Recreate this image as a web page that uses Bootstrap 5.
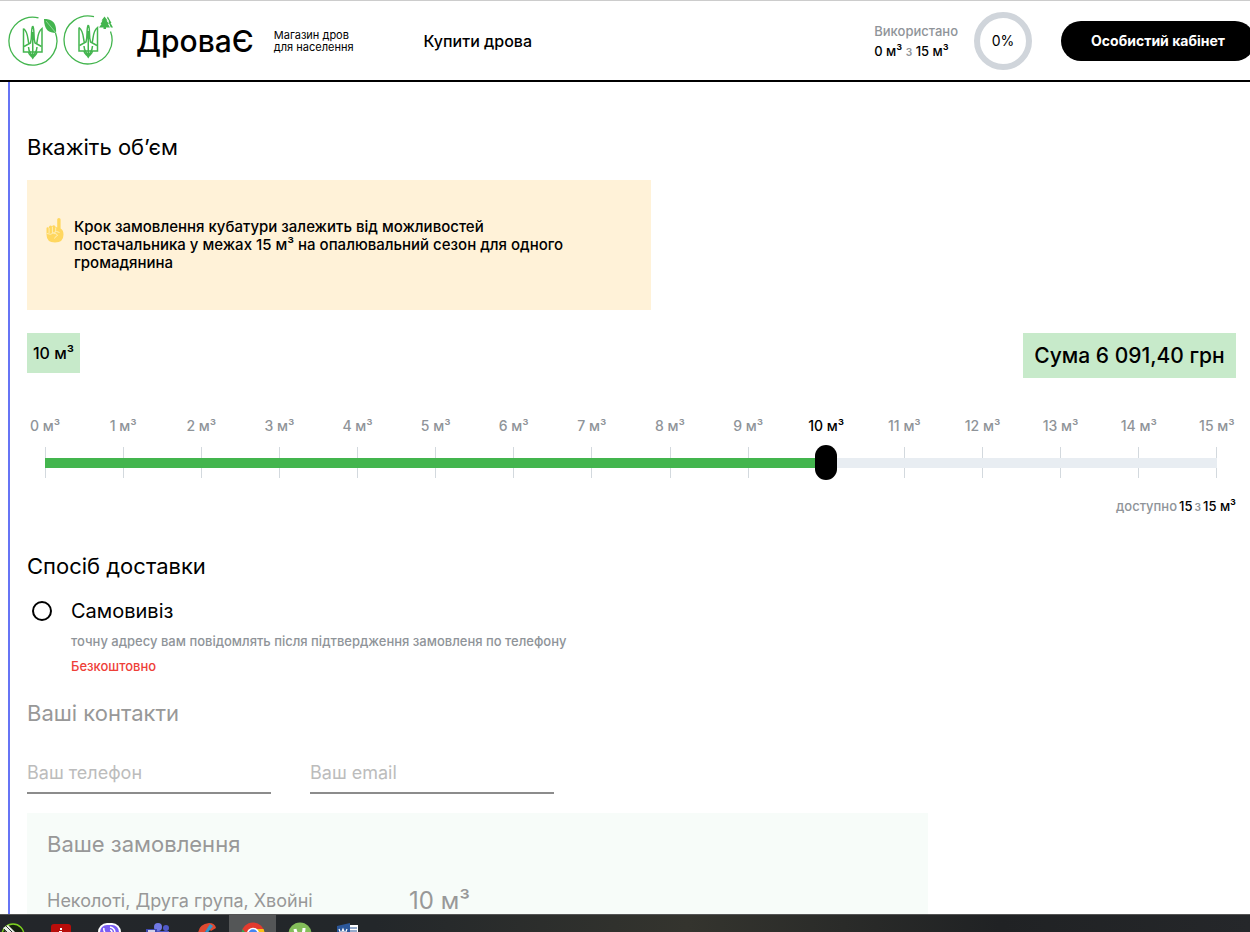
<!DOCTYPE html>
<html lang="uk">
<head>
<meta charset="utf-8">
<meta name="viewport" content="width=device-width, initial-scale=1">
<title>ДроваЄ — Магазин дров для населення</title>
<link href="https://cdn.jsdelivr.net/npm/bootstrap@5.3.0/dist/css/bootstrap.min.css" rel="stylesheet">
<style>
:root { --leaf: #43b54e; --mint: #c7eaca; --muted: #8f9499; }
body { font-family: Inter, "Liberation Sans", sans-serif; font-size: 16px; color: #000; background: #fff; }
.site-head { border-top: 1px solid #ccc; border-bottom: 2px solid #000; height: 82px; padding-left: 8px; }
.brand-name { font-size: 30px; line-height: 40px; margin-left: 22px; font-weight: 500; }
.brand-note { font-size: 11px; line-height: 12px; margin-left: 20px; }
.menu-link { font-size: 16px; font-weight: 500; margin-left: 70px; }
.usage { font-size: 13px; line-height: 20px; margin-right: 16px; font-weight: 500; }
.text-soft { color: var(--muted); }
.gauge { width: 58px; height: 58px; border: 6px solid #d0d5db; font-size: 14px; margin-right: 29px; }
.btn-cabinet { background: #000; color: #fff; font-size: 14px; font-weight: 700; height: 40px; width: 194px; margin-right: -5px; }
.btn-cabinet:hover { background: #333; color: #fff; }
.page-body { margin-left: 8px; border-left: 2px solid #6674f5; padding: 50px 14px 0 17px; }
.heading { font-size: 22px; line-height: 30px; font-weight: 400; margin: 0; }
.hint { background: #fff2d8; max-width: 624px; padding: 38px 68px 38px 19px; margin-top: 18px; gap: 10px; }
.hint p { font-size: 15px; line-height: 18px; font-weight: 500; }
.totals { margin-top: 23px; }
.chip-volume { background: var(--mint); height: 40px; width: 53px; font-size: 16px; font-weight: 500; }
.chip-sum { background: var(--mint); height: 45px; width: 213px; font-size: 21px; font-weight: 500; }
.scale { margin: 38px 19px 0 18px; font-size: 14px; line-height: 20px; font-weight: 500; }
.scale-labels span, .scale-ticks i { width: 0; }
.scale-labels { color: var(--muted); }
.scale-labels .current { color: #000; }
.rail { display: grid; margin-top: 9px; height: 35px; align-items: center; }
.rail > * { grid-area: 1 / 1; }
.scale-ticks { height: 31px; }
.scale-ticks i { border-left: 1px solid #d3d9de; height: 31px; }
.volume-range { appearance: none; -webkit-appearance: none; height: 35px; margin: 0 -11px; background: linear-gradient(90deg, var(--leaf) 66.67%, #e8edf2 66.67%) center / calc(100% - 22px) 10px no-repeat; }
.volume-range::-webkit-slider-thumb { -webkit-appearance: none; width: 22px; height: 35px; border-radius: 11px; background: #000; }
.volume-range::-moz-range-thumb { width: 22px; height: 35px; border: 0; border-radius: 11px; background: #000; }
.available { font-size: 13px; line-height: 20px; margin-top: 16px; gap: 2px; font-weight: 500; }
.delivery { margin-top: 35px; }
.pickup { margin: 15px 0 0 5px; gap: 19px; }
.pickup-radio { appearance: none; -webkit-appearance: none; width: 20px; height: 20px; border: 2px solid #000; border-radius: 50%; margin: 5px 0 0; flex: none; }
.pickup-radio:checked { background: radial-gradient(#000 45%, #fff 50%); }
.pickup-title { font-size: 20px; line-height: 30px; }
.pickup-note, .pickup-price { font-size: 13px; line-height: 20px; margin-top: 5px; font-weight: 500; }
.pickup-price { color: #ee4038; }
.contacts { margin-top: 22px; }
.faded { color: #989898; }
.contact-row { margin-top: 25px; gap: 39px; }
.line-field { width: 244px; height: 41px; border: 0; border-bottom: 2px solid #8c8c8c; font-size: 18px; padding: 0; background: none; }
.line-field::placeholder { color: #bcbcbc; opacity: 1; }
.order { background: #f7fcf9; margin-top: 19px; max-width: 901px; padding: 16px 20px 40px; }
.order-row { margin-top: 27px; line-height: 30px; font-size: 18px; }
.order-kind { width: 362px; }
.order-amount { font-size: 24px; }
.taskbar { height: 18px; background: linear-gradient(90deg, #23262a 0, #23272a 30%, #34342e 55%, #202224 80%, #25272a 100%); border-top: 1px solid #555; }
</style>
</head>
<body class="vh-100 d-flex flex-column overflow-hidden">
<header class="site-head d-flex align-items-center flex-shrink-0 overflow-hidden">
  <a href="#" class="d-flex flex-shrink-0" aria-label="ДроваЄ">
    <svg width="106" height="52" viewBox="0 0 106 52" fill="none" stroke="#43b54e">
      <defs>
        <g id="trident" stroke-width="1.5" stroke-linejoin="miter">
          <path d="M15.500 13.500V37H34V13.500C29 17 30 25 28.500 29M15.500 13.500C20.500 17 19.500 25 21 29"/>
          <path d="M24.750 11C22.500 15 24.500 22 22.500 28L16 31.500M24.750 11C27 15 25 22 27 28L33.500 31.500M24.750 17V43M20.500 32C20.500 37 23 38 24.750 42C26.500 38 29 37 29 32M20.500 37C21 41 23 40 24.750 43C26.500 40 28.500 41 29 37"/>
        </g>
      </defs>
      <path d="M30.500 2.800A24 24 0 1 0 47.500 18" stroke-width="1.300"/>
      <use href="#trident"/>
      <path d="M36 4C42 4 49 6 48 18C41 18 36 15 36 4Z" fill="#43b54e" stroke="none"/>
      <path d="M38 6L48 18" stroke="#b5e2b9" stroke-width=".7"/>
      <path d="M86 1.700A24 24 0 1 0 102.500 16.500" stroke-width="1.300"/>
      <use href="#trident" x="55.500" y="-1"/>
      <path d="M96.500 1.500L93.500 5.500H94.500L92.500 9H93.500L91 12.500H95.500V14H98V12.500H102L100 9H101L98.500 5.500H99.500Z M99.800 1.500L99 3L101 6L100.500 7L102.800 12.500H105L102.500 8H103.500Z" fill="#43b54e" stroke="none"/>
    </svg>
  </a>
  <div class="brand-name">ДроваЄ</div>
  <div class="brand-note text-nowrap">Магазин дров<br>для населення</div>
  <a href="#" class="menu-link text-black text-decoration-none text-nowrap">Купити дрова</a>
  <div class="usage ms-auto text-nowrap">
    <div class="text-soft">Використано</div>
    <div>0 м³ <span class="text-soft">з</span> 15 м³</div>
  </div>
  <div class="gauge rounded-circle d-flex align-items-center justify-content-center flex-shrink-0">0%</div>
  <button type="button" class="btn btn-cabinet rounded-pill flex-shrink-0 p-0 text-nowrap">Особистий кабінет</button>
</header>

<main class="page-body flex-grow-1 overflow-hidden">
  <h2 class="heading">Вкажіть об’єм</h2>
  <div class="hint d-flex align-items-start">
    <svg class="flex-shrink-0" width="18" height="26" viewBox="0 0 18 26" aria-hidden="true">
      <path d="M11.200 1.500Q11.200 0 12.900 0Q14.600 0 14.600 1.500V10.500Q17.500 12 17.500 16.500Q17.500 24.500 9 24.500Q.500 24.500 .500 16.500V10.500Q.500 9.300 1.600 9.300Q2.800 9.300 3 10.300V9Q3.100 7.500 4.500 7.500Q6 7.500 6.200 9V8.500Q6.400 7.200 7.800 7.200Q9.300 7.200 9.500 8.800L11.200 9.500Z" fill="#ffd75f"/>
      <path d="M3.100 10V15M6.400 9V15M9.700 9.500V14M.800 15.500Q5 17.500 8 14.500Q10.500 12.500 13.500 14.500M7.500 15.500Q11 15 11.500 17.500Q9.500 18 8.500 20.500" fill="none" stroke="#fff0c0" stroke-width=".9"/>
    </svg>
    <p class="mb-0">Крок замовлення кубатури залежить від можливостей постачальника у межах 15 м³ на опалювальний сезон для одного громадянина</p>
  </div>

  <div class="totals d-flex justify-content-between align-items-start">
    <div class="chip-volume d-flex align-items-center justify-content-center">10 м³</div>
    <div class="chip-sum d-flex align-items-center justify-content-center">Сума 6 091,40 грн</div>
  </div>

  <div class="scale">
    <div class="scale-labels d-flex justify-content-between text-nowrap">
      <span class="d-flex justify-content-center">0 м³</span><span class="d-flex justify-content-center">1 м³</span><span class="d-flex justify-content-center">2 м³</span><span class="d-flex justify-content-center">3 м³</span><span class="d-flex justify-content-center">4 м³</span><span class="d-flex justify-content-center">5 м³</span><span class="d-flex justify-content-center">6 м³</span><span class="d-flex justify-content-center">7 м³</span><span class="d-flex justify-content-center">8 м³</span><span class="d-flex justify-content-center">9 м³</span><span class="d-flex justify-content-center current">10 м³</span><span class="d-flex justify-content-center">11 м³</span><span class="d-flex justify-content-center">12 м³</span><span class="d-flex justify-content-center">13 м³</span><span class="d-flex justify-content-center">14 м³</span><span class="d-flex justify-content-center">15 м³</span>
    </div>
    <div class="rail">
      <div class="scale-ticks d-flex justify-content-between" aria-hidden="true"><i></i><i></i><i></i><i></i><i></i><i></i><i></i><i></i><i></i><i></i><i></i><i></i><i></i><i></i><i></i><i></i></div>
      <input type="range" class="volume-range" min="0" max="15" step="1" value="10" aria-label="Об’єм, м³">
    </div>
  </div>
  <div class="available d-flex justify-content-end"><span class="text-soft">доступно</span><span>15</span><span class="text-soft">з</span><span>15 м³</span></div>

  <h2 class="heading delivery">Спосіб доставки</h2>
  <div class="pickup d-flex align-items-start">
    <input type="radio" class="pickup-radio" id="pickup" name="delivery">
    <label for="pickup">
      <span class="pickup-title d-block">Самовивіз</span>
      <span class="pickup-note text-soft d-block">точну адресу вам повідомлять після підтвердження замовленя по телефону</span>
      <span class="pickup-price d-block">Безкоштовно</span>
    </label>
  </div>

  <h2 class="heading contacts faded">Ваші контакти</h2>
  <div class="contact-row d-flex">
    <input type="tel" class="line-field" placeholder="Ваш телефон" aria-label="Ваш телефон">
    <input type="email" class="line-field" placeholder="Ваш email" aria-label="Ваш email">
  </div>

  <section class="order faded">
    <h2 class="heading">Ваше замовлення</h2>
    <div class="order-row d-flex">
      <div class="order-kind">Неколоті, Друга група, Хвойні</div>
      <div class="order-amount">10 м³</div>
    </div>
  </section>
</main>

<footer class="taskbar flex-shrink-0 overflow-hidden">
  <svg class="d-block" width="375" height="17" viewBox="0 0 375 17" aria-hidden="true">
    <circle cx="13" cy="20" r="11" fill="#16210f" stroke="#7ed321" stroke-width="1.500"/>
    <path d="M3 13L8 10L20 22H10Z" fill="#e8eee5"/><path d="M6 11L17 22M4 14L12 22" stroke="#333" stroke-width="1"/>
    <rect x="51" y="9" width="20" height="20" rx="3" fill="#b90d0a"/><path d="M60 13H62V15H60ZM59 16H62V20H59Z" fill="#fff"/>
    <rect x="98" y="8" width="23" height="24" rx="9" fill="#fff"/><rect x="100" y="10" width="19" height="20" rx="7" fill="#7a5df5"/>
    <path d="M104 13Q103 16 107 20M110 12Q115 13 115 18M110 15Q112 15 112 18" fill="none" stroke="#fff" stroke-width="1.500"/>
    <circle cx="158" cy="12" r="4" fill="#7179e5"/><circle cx="166" cy="13" r="3" fill="#5059c9"/><path d="M152 16H169V17H152Z" fill="#5059c9"/><rect x="146" y="14" width="11" height="9" fill="#4049b0"/><path d="M148 16H155" stroke="#fff" stroke-width="1.500"/>
    <path d="M198 20Q198 9 209 8Q215 8 216 13L211 16Q208 12 205 17V20Z" fill="#e04930"/><path d="M210 9L213 11L206 20H203Z" fill="#3695c8"/>
    <rect x="229" width="47" height="17" fill="#545657"/>
    <circle cx="253" cy="19" r="11.500" fill="#e33b2e"/><path d="M253 14H263.500Q265 17 264 20H253Z" fill="#fbc116"/><path d="M242.500 14L249 22H243Q241 18 242.500 14Z" fill="#2da94f"/><circle cx="253" cy="19" r="5.500" fill="#4285f4" stroke="#fff" stroke-width="1.500"/>
    <circle cx="300" cy="19" r="11.500" fill="#84bd5a"/><path d="M295 14Q296 20 300 20Q304 20 304 13" fill="none" stroke="#fff" stroke-width="3"/>
    <rect x="346" y="10" width="12" height="14" fill="#fff"/><path d="M349 13H357M349 16H357" stroke="#2b5797"/><path d="M337 11L350 8V24H337Z" fill="#2b579a"/><path d="M339 14L341 19L343 14L345 19L347 14" fill="none" stroke="#fff" stroke-width="1.200"/>
  </svg>
</footer>
<script src="https://cdn.jsdelivr.net/npm/bootstrap@5.3.0/dist/js/bootstrap.bundle.min.js"></script>
</body>
</html>
